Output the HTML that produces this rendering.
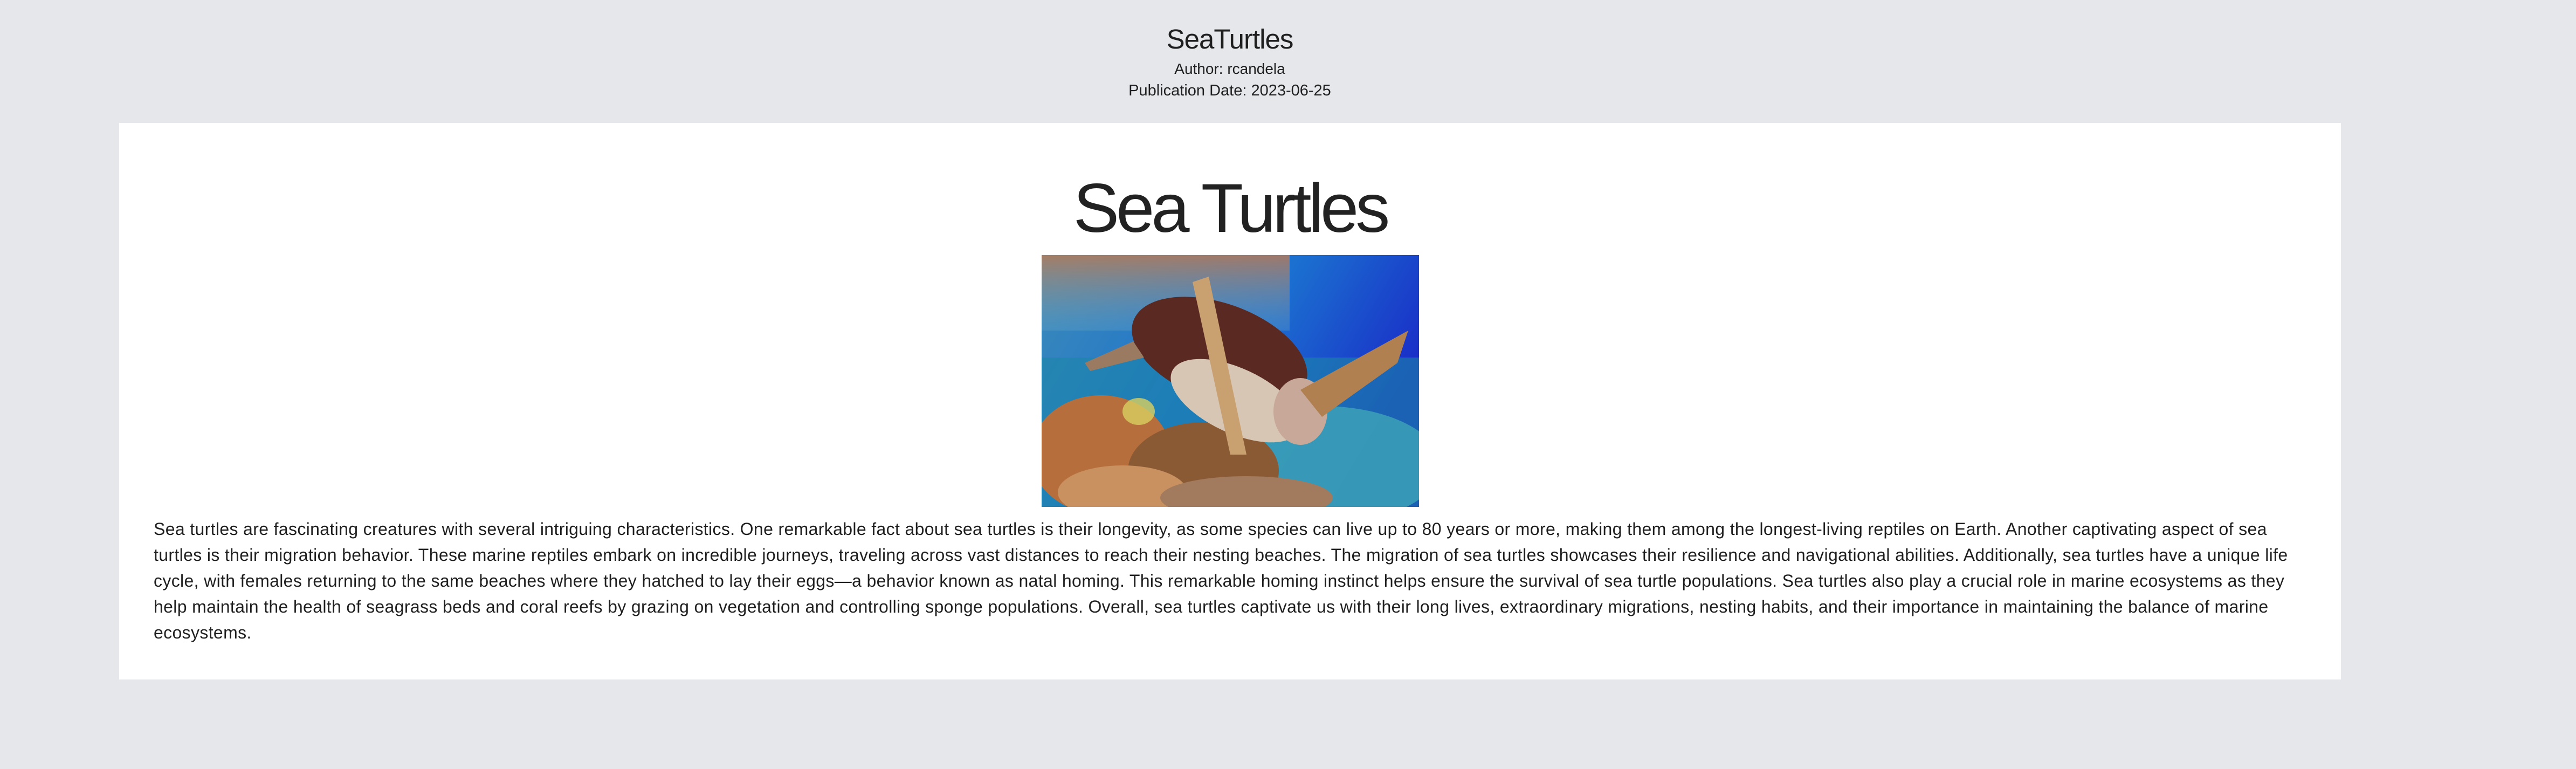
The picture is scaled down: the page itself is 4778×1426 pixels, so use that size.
<!DOCTYPE html>
<html><head><meta charset="utf-8"><style>
html,body{margin:0;padding:0}
body{width:4778px;height:1426px;background:#e5e7eb;position:relative;overflow:hidden;font-family:"Liberation Sans",Helvetica,Arial,sans-serif;color:#1f1f1f}
.c{position:absolute;left:0;width:4562px;text-align:center;white-space:nowrap}
#card{position:absolute;left:221px;top:228px;width:4121px;height:1032px;background:#fff}
#h1{position:absolute;left:0;width:4121px;text-align:center;top:84px;font-size:128px;line-height:150px;font-weight:400;color:#222;letter-spacing:-6px}
#img{position:absolute;left:1711px;top:245px;width:700px;height:467px}
#p{position:absolute;left:64px;top:729px;width:3993px;font-size:32px;line-height:48px;color:#1f1f1f;letter-spacing:0.35px}
</style></head><body>
<div class="c" style="top:44px;font-size:51px;line-height:58px;letter-spacing:-1px">SeaTurtles</div>
<div class="c" style="top:110px;font-size:28px;line-height:36px">Author: rcandela</div>
<div class="c" style="top:150px;font-size:29px;line-height:36px">Publication Date: 2023-06-25</div>
<div id="card">
<div id="h1">Sea Turtles</div>
<svg id="img" viewBox="0 0 700 467" preserveAspectRatio="none">
<defs>
<linearGradient id="w" x1="0" y1="0" x2="1" y2="0.4"><stop offset="0" stop-color="#3b8bb8"/><stop offset="0.6" stop-color="#1b6fd0"/><stop offset="1" stop-color="#1a2fc8"/></linearGradient>
<linearGradient id="s" x1="0" y1="0" x2="0" y2="1"><stop offset="0" stop-color="#c07a50" stop-opacity="0.8"/><stop offset="1" stop-color="#6aa7c8" stop-opacity="0.3"/></linearGradient>
</defs>
<rect width="700" height="467" fill="url(#w)"/>
<rect width="460" height="140" fill="url(#s)"/>
<rect x="0" y="190" width="700" height="277" fill="#1d86a8" opacity="0.6"/>
<ellipse cx="520" cy="390" rx="220" ry="110" fill="#3fa5b8" opacity="0.8"/>
<ellipse cx="110" cy="370" rx="130" ry="110" fill="#b66f3c"/>
<ellipse cx="300" cy="400" rx="140" ry="90" fill="#8a5a35"/>
<ellipse cx="150" cy="440" rx="120" ry="50" fill="#c99060"/>
<ellipse cx="380" cy="450" rx="160" ry="40" fill="#a27a5e"/>
<ellipse cx="330" cy="180" rx="170" ry="90" fill="#5a2a22" transform="rotate(20 330 180)"/>
<ellipse cx="360" cy="270" rx="130" ry="60" fill="#d8c6b5" transform="rotate(25 360 270)"/>
<ellipse cx="480" cy="290" rx="50" ry="62" fill="#c8a898"/>
<path d="M480 250 L680 140 L660 200 L520 300 Z" fill="#b08050"/>
<path d="M280 50 L310 40 L380 370 L350 370 Z" fill="#c9a070"/>
<path d="M80 200 L170 160 L190 190 L90 215 Z" fill="#9a7a60"/>
<ellipse cx="180" cy="290" rx="30" ry="25" fill="#d8d060" opacity="0.8"/>
</svg>
<div id="p">Sea turtles are fascinating creatures with several intriguing characteristics. One remarkable fact about sea turtles is their longevity, as some species can live up to 80 years or more, making them among the longest-living reptiles on Earth. Another captivating aspect of sea turtles is their migration behavior. These marine reptiles embark on incredible journeys, traveling across vast distances to reach their nesting beaches. The migration of sea turtles showcases their resilience and navigational abilities. Additionally, sea turtles have a unique life cycle, with females returning to the same beaches where they hatched to lay their eggs—a behavior known as natal homing. This remarkable homing instinct helps ensure the survival of sea turtle populations. Sea turtles also play a crucial role in marine ecosystems as they help maintain the health of seagrass beds and coral reefs by grazing on vegetation and controlling sponge populations. Overall, sea turtles captivate us with their long lives, extraordinary migrations, nesting habits, and their importance in maintaining the balance of marine ecosystems.</div>
</div>
</body></html>
